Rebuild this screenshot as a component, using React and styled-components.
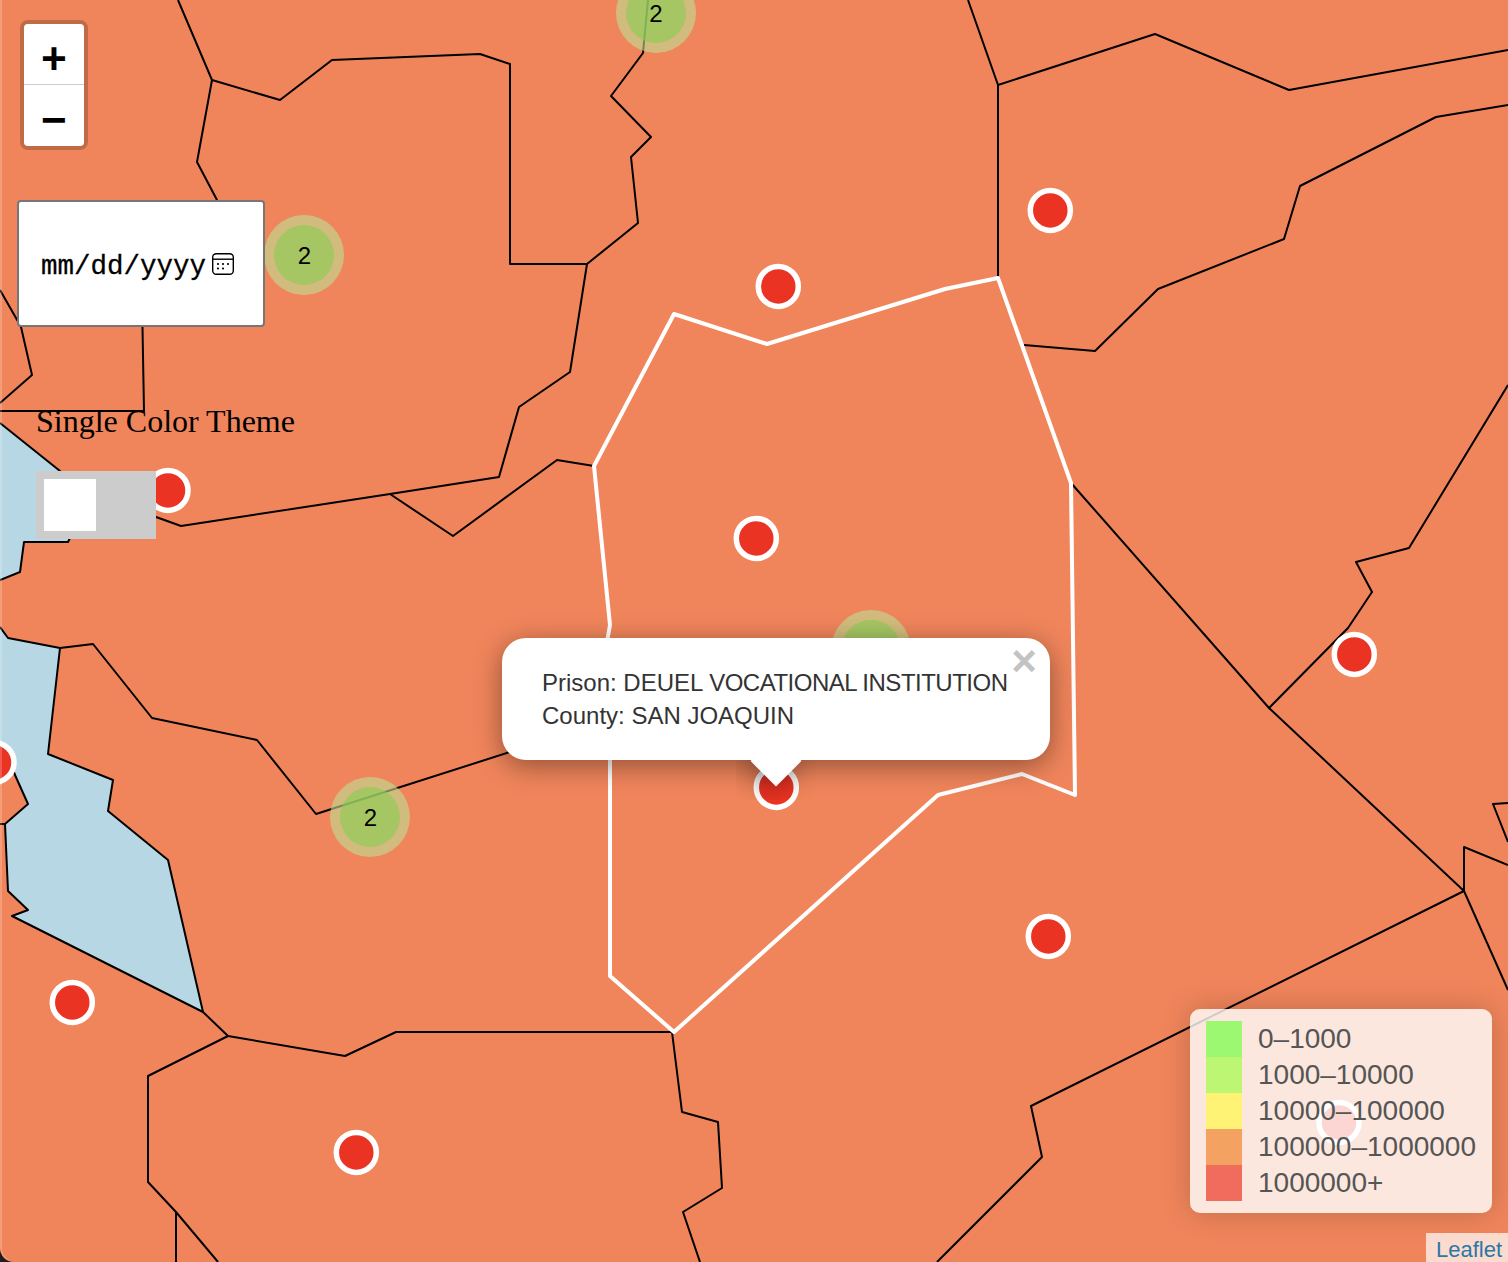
import React from "react";
import styled, { createGlobalStyle } from "styled-components";

const Global = createGlobalStyle`
  html, body { margin: 0; padding: 0; background: #1e1e1e; }
  #root { width: 1508px; height: 1262px; overflow: hidden; }
`;

const MapFrame = styled.div`
  position: relative;
  width: 1508px;
  height: 1262px;
  overflow: hidden;
  background: #f0855b;
  border-bottom-left-radius: 14px;
  font-family: "Liberation Sans", Arial, sans-serif;
  &::after {
    content: "";
    position: absolute;
    inset: 0;
    pointer-events: none;
    border-bottom-left-radius: 14px;
    box-shadow: inset 2px 0 0 rgba(255, 255, 255, 0.2);
    z-index: 5;
  }
`;

const Regions = styled.svg`
  position: absolute;
  left: 0;
  top: 0;
  display: block;
`;

const Cluster = styled.div.attrs((p) => ({ style: { left: p.$x - 40, top: p.$y - 40 } }))`
  position: absolute;
  width: 80px;
  height: 80px;
  border-radius: 50%;
  background: rgba(190, 225, 148, 0.6);
  display: flex;
  align-items: center;
  justify-content: center;
`;

const ClusterCore = styled.div`
  width: 60px;
  height: 60px;
  border-radius: 50%;
  background: rgba(135, 205, 82, 0.6);
  color: #000;
  font-size: 24px;
  line-height: 62px;
  text-align: center;
`;

const LeftControls = styled.div`
  position: absolute;
  left: 0;
  top: 0;
  z-index: 3;
  display: flex;
  flex-direction: column;
  align-items: flex-start;
`;

const ZoomBar = styled.div`
  margin: 20px 0 0 20px;
  width: 60px;
  border: 4px solid rgba(0, 0, 0, 0.2);
  border-radius: 8px;
  background-clip: padding-box;
  display: flex;
  flex-direction: column;
`;

const ZoomButton = styled.div`
  height: ${(p) => (p.$top ? "44px" : "45px")};
  padding-top: 16px;
  background: #fff;
  color: #000;
  font-family: "Liberation Mono", "Courier New", monospace;
  font-weight: 700;
  font-size: 44px;
  line-height: 44px;
  text-align: center;
  border-radius: ${(p) => (p.$top ? "4px 4px 0 0" : "0 0 4px 4px")};
  border-bottom: ${(p) => (p.$top ? "1px solid #ccc" : "none")};
`;

const DateField = styled.div`
  margin: 50px 0 0 17px;
  box-sizing: border-box;
  width: 248px;
  height: 127px;
  background: #fff;
  border: 2px solid #767676;
  border-radius: 4px;
  display: flex;
  align-items: center;
  padding: 0 28px 0 22px;
  justify-content: space-between;
  color: #000;
  font-family: "Liberation Mono", "Courier New", monospace;
  font-size: 27.5px;
  -webkit-text-stroke: 0.3px #000;
`;

const DateText = styled.span`
  white-space: pre;
  position: relative;
  top: 3px;
`;

const ThemeLabel = styled.div`
  margin: 76px 0 0 36px;
  font-family: "Liberation Serif", "Times New Roman", serif;
  font-size: 32px;
  line-height: 37px;
  color: #000;
  white-space: nowrap;
`;

const Toggle = styled.div`
  margin: 31px 0 0 36px;
  box-sizing: border-box;
  width: 120px;
  height: 68px;
  padding: 8px;
  background: #ccc;
`;

const ToggleKnob = styled.div`
  width: 52px;
  height: 52px;
  background: #fff;
`;

const Popup = styled.div`
  position: absolute;
  left: 502px;
  top: 638px;
  z-index: 2;
  width: 548px;
  height: 122px;
`;

const PopupTipClip = styled.div`
  position: absolute;
  left: 234px;
  top: 122px;
  width: 80px;
  height: 40px;
  overflow: hidden;
  pointer-events: none;
`;

const PopupTip = styled.div`
  width: 36px;
  height: 36px;
  margin: -17px auto 0;
  background: #fff;
  transform: rotate(45deg);
  box-shadow: 0 6px 28px rgba(0, 0, 0, 0.4);
`;

const PopupBody = styled.div`
  position: relative;
  box-sizing: border-box;
  height: 122px;
  padding: 28px 40px 26px;
  background: #fff;
  border-radius: 24px;
  box-shadow: 0 6px 28px rgba(0, 0, 0, 0.4);
  color: #333;
  font-size: 24px;
  line-height: 33px;
  white-space: nowrap;
`;

const TightCaps = styled.span`
  letter-spacing: -0.5px;
`;

const PopupClose = styled.div`
  position: absolute;
  top: 1px;
  right: 4px;
  width: 44px;
  height: 44px;
  color: #c3c3c3;
  font-size: 44px;
  font-weight: 700;
  line-height: 44px;
  text-align: center;
`;

const Legend = styled.div`
  position: absolute;
  right: 16px;
  bottom: 49px;
  z-index: 3;
  box-sizing: border-box;
  width: 302px;
  padding: 12px 16px;
  background: rgba(255, 255, 255, 0.8);
  border-radius: 10px;
  box-shadow: 0 0 30px rgba(0, 0, 0, 0.2);
  color: #555;
  font-size: 28px;
  line-height: 36px;
  display: flex;
  flex-direction: column;
`;

const LegendRow = styled.div`
  display: flex;
  align-items: center;
  height: 36px;
  white-space: nowrap;
`;

const Swatch = styled.i`
  display: block;
  width: 36px;
  height: 36px;
  margin-right: 16px;
  background: ${(p) => p.$color};
`;

const Attribution = styled.div`
  position: absolute;
  right: 0;
  bottom: 0;
  z-index: 3;
  box-sizing: border-box;
  height: 29px;
  padding: 0 6px 0 10px;
  background: rgba(255, 255, 255, 0.7);
  color: #2b77a8;
  font-size: 22px;
  line-height: 33px;
`;

const black = [
  "178,0 212,80 280,100 332,60 480,54 510,64 510,264 587,264 570,372 519,407 499,477 390,494 181,526 156,517 130,505",
  "212,80 197,162 217,200 240,240",
  "142,300 144,411 0,411",
  "0,290 16,318 21,327 32,375 0,403",
  "0,423 60,471 90,500",
  "70,538 68,542 24,542 20,572 0,580",
  "0,627 8,638 60,648 93,644 152,718 257,740 316,814 510,752",
  "60,648 48,754 113,780 108,811 168,860 203,1012 12,916 28,910 8,891 5,824 28,804 15,775 10,760",
  "5,824 0,824",
  "203,1012 228,1036 345,1056 396,1032 672,1032 682,1112 718,1122 722,1188 683,1212 700,1262",
  "228,1036 148,1076 148,1182 176,1212 218,1262",
  "176,1212 176,1262",
  "648,0 643,53 611,96 651,137 631,157 638,223 587,264",
  "594,466 557,460 453,536 390,494",
  "968,0 998,85 1155,34 1289,90 1508,50",
  "998,85 998,278",
  "1508,105 1436,117 1300,186 1284,239 1158,289 1095,351 1024,345",
  "1508,385 1409,548 1356,562 1372,592 1348,628 1269,708 1071,483",
  "1269,708 1464,891 1464,847 1508,865",
  "1508,803 1493,804 1508,842",
  "1464,891 1508,990",
  "1464,891 1031,1106 1042,1157 937,1262",
];

const waterA = "0,423 60,471 90,500 90,538 70,538 68,542 24,542 20,572 0,580";
const waterB =
  "0,627 8,638 60,648 48,754 113,780 108,811 168,860 203,1012 12,916 28,910 8,891 5,824 28,804 15,775 10,760 0,745";
const selected =
  "674,314 767,344 945,289 998,278 1071,483 1075,795 1022,774 938,795 674,1032 610,976 610,760 607,642 610,625 594,466";

const markers = [
  [1050.3, 210.4], [778.3, 286.4], [756.3, 538.4], [1354.3, 654.4], [1048.3, 936.4], [776.3, 787.4],
  [72.3, 1002.4], [356.3, 1152.4], [168, 490.4], [-6, 762.4], [1339, 1122.4],
];
const clusters = [[656, 13], [304.4, 255], [370.4, 817], [871, 650]];
const legend = [
  ["#9df871", "0–1000"],
  ["#bcf672", "1000–10000"],
  ["#fff375", "10000–100000"],
  ["#f3a262", "100000–1000000"],
  ["#f16c5c", "1000000+"],
];

const CalendarIcon = () => (
  <svg width="24" height="24" viewBox="0 0 24 24" fill="none">
    <rect x="1.7" y="1.7" width="20.6" height="20.6" rx="3.5" stroke="#000" strokeWidth="1.4" />
    <path d="M2 7.2H22" stroke="#000" strokeWidth="1.4" />
    <g fill="#000">
      <circle cx="7" cy="12" r="1.1" />
      <circle cx="12" cy="12" r="1.1" />
      <circle cx="17" cy="12" r="1.1" />
      <circle cx="7" cy="16.5" r="1.1" />
      <circle cx="12" cy="16.5" r="1.1" />
    </g>
  </svg>
);

export default function App() {
  return (
    <>
      <Global />
      <MapFrame>
        <Regions width="1508" height="1262" viewBox="0 0 1508 1262">
          <polygon points={waterA} fill="#b6d7e3" />
          <polygon points={waterB} fill="#b6d7e3" />
          {black.map((pts) => (
            <polyline key={pts} points={pts} fill="none" stroke="#000" strokeWidth="2" strokeLinejoin="round" />
          ))}
          <polygon points={selected} fill="none" stroke="#fff" strokeWidth="4" strokeLinejoin="round" />
          {markers.map(([x, y]) => (
            <circle key={x} cx={x} cy={y} r="20" fill="#eb3323" stroke="#fff" strokeWidth="5.5" />
          ))}
        </Regions>
        {clusters.map(([x, y]) => (
          <Cluster key={x} $x={x} $y={y}>
            <ClusterCore>2</ClusterCore>
          </Cluster>
        ))}
        <LeftControls>
          <ZoomBar>
            <ZoomButton $top>+</ZoomButton>
            <ZoomButton>−</ZoomButton>
          </ZoomBar>
          <DateField>
            <DateText>mm/dd/yyyy</DateText>
            <CalendarIcon />
          </DateField>
          <ThemeLabel>Single Color Theme</ThemeLabel>
          <Toggle>
            <ToggleKnob />
          </Toggle>
        </LeftControls>
        <Popup>
          <PopupBody>
            Prison: DEUEL <TightCaps>VOCATIONAL INSTITUTION</TightCaps>
            <br />
            County: SAN JOAQUIN
            <PopupClose>×</PopupClose>
          </PopupBody>
          <PopupTipClip>
            <PopupTip />
          </PopupTipClip>
        </Popup>
        <Legend>
          {legend.map(([color, label]) => (
            <LegendRow key={label}>
              <Swatch $color={color} />
              {label}
            </LegendRow>
          ))}
        </Legend>
        <Attribution>Leaflet</Attribution>
      </MapFrame>
    </>
  );
}
